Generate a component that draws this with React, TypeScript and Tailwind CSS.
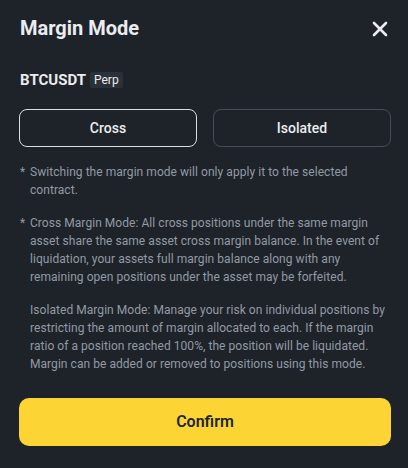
import React, { useState } from 'react';

const notes = [
  { star: true, lines: ['Switching the margin mode will only apply it to the selected', 'contract.'] },
  {
    star: true,
    lines: [
      'Cross Margin Mode: All cross positions under the same margin',
      'asset share the same asset cross margin balance. In the event of',
      'liquidation, your assets full margin balance along with any',
      'remaining open positions under the asset may be forfeited.'
    ]
  },
  {
    star: false,
    lines: [
      'Isolated Margin Mode: Manage your risk on individual positions by',
      'restricting the amount of margin allocated to each. If the margin',
      'ratio of a position reached 100%, the position will be liquidated.',
      'Margin can be added or removed to positions using this mode.'
    ]
  }
];

const CloseIcon = () => (
  <svg width="16" height="16" viewBox="0 0 16 16" fill="none" stroke="#EAECEF" strokeWidth={2.6} strokeLinecap="round">
    <path d="M2 2L14 14M14 2L2 14" />
  </svg>
);

const App: React.FC = () => {
  const [mode, setMode] = useState<'cross' | 'isolated'>('cross');

  return (
    <div className="w-[408px] h-[468px] bg-[#1E2329] pl-[19px] pr-[17px] pt-[14px] font-['Roboto',sans-serif]">
      <div className="flex items-center justify-between h-7">
        <h2 className="text-[20px] leading-7 font-bold text-[#EAECEF] ml-px">Margin Mode</h2>
        <button className="mr-[3px] mt-[1px]">
          <CloseIcon />
        </button>
      </div>

      <div className="flex items-center mt-7 h-5">
        <span className="text-[15px] font-bold text-[#EAECEF] ml-px">BTCUSDT</span>
        <span className="ml-[4px] bg-[#2B3139] rounded-[2px] px-[4px] h-4 flex items-center text-[12px] text-[#EAECEF]">Perp</span>
      </div>

      <div className="grid grid-cols-2 gap-4 mt-[19px]">
        <button
          onClick={() => setMode('cross')}
          className={`h-[38px] rounded-lg border text-[14px] font-medium text-[#EAECEF] ${mode === 'cross' ? 'border-[#D9DCE0] border-[1.5px]' : 'border-[#474D57]'}`}
        >
          Cross
        </button>
        <button
          onClick={() => setMode('isolated')}
          className={`h-[38px] rounded-lg border text-[14px] font-medium text-[#EAECEF] ${mode === 'isolated' ? 'border-[#D9DCE0] border-[1.5px]' : 'border-[#474D57]'}`}
        >
          Isolated
        </button>
      </div>

      <div className="mt-[16px] flex flex-col gap-[15px] text-[12px] leading-[18px] tracking-[0.05px] text-[#929AA5]">
        {notes.map((n, i) => (
          <div key={i} className="flex">
            <span className="w-[10px] shrink-0 ml-px">{n.star ? '*' : ''}</span>
            <p className="whitespace-nowrap">
              {n.lines.map((l, j) => (
                <span key={j} className="block">{l}</span>
              ))}
            </p>
          </div>
        ))}
      </div>

      <button className="mt-[25px] w-full h-12 rounded-[10px] bg-[#FCD535] text-[16px] font-semibold text-[#202630]">
        Confirm
      </button>
    </div>
  );
};

export default App;
